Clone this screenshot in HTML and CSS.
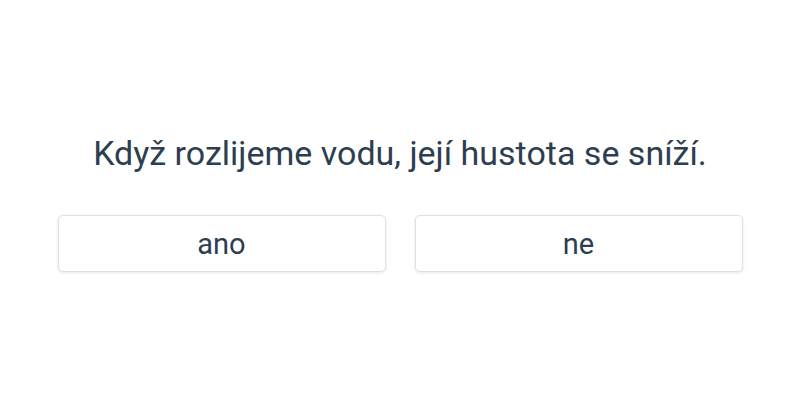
FILE: index.html
```html
<!DOCTYPE html>
<html lang="cs">
<head>
<meta charset="utf-8">
<link rel="stylesheet" href="styles.css">
</head>
<body>
<main class="quiz">
  <h1 class="question">Když rozlijeme vodu, její hustota se sníží.</h1>
  <div class="answers">
    <button class="answer">ano</button>
    <button class="answer">ne</button>
  </div>
</main>
</body>
</html>
```
FILE: styles.css
```css
html, body {
  margin: 0;
  padding: 0;
  background: #fff;
}
body {
  font-family: Roboto, "Liberation Sans", sans-serif;
  color: #2c3e50;
  width: 800px;
  height: 400px;
}
.quiz {
  display: flex;
  flex-direction: column;
  align-items: center;
  padding-top: 132px;
}
.question {
  margin: 0;
  font-size: 34px;
  font-weight: 400;
  line-height: 42px;
  text-align: center;
}
.answers {
  display: flex;
  gap: 29px;
  margin-top: 41px;
}
.answer {
  width: 328px;
  height: 57px;
  background: #fff;
  border: 1px solid #e0e0e0;
  border-radius: 5px;
  box-shadow: 0 1px 3px rgba(0,0,0,0.1);
  font-family: Roboto, "Liberation Sans", sans-serif;
  font-size: 29px;
  color: #2c3e50;
  padding: 0;
}
```
